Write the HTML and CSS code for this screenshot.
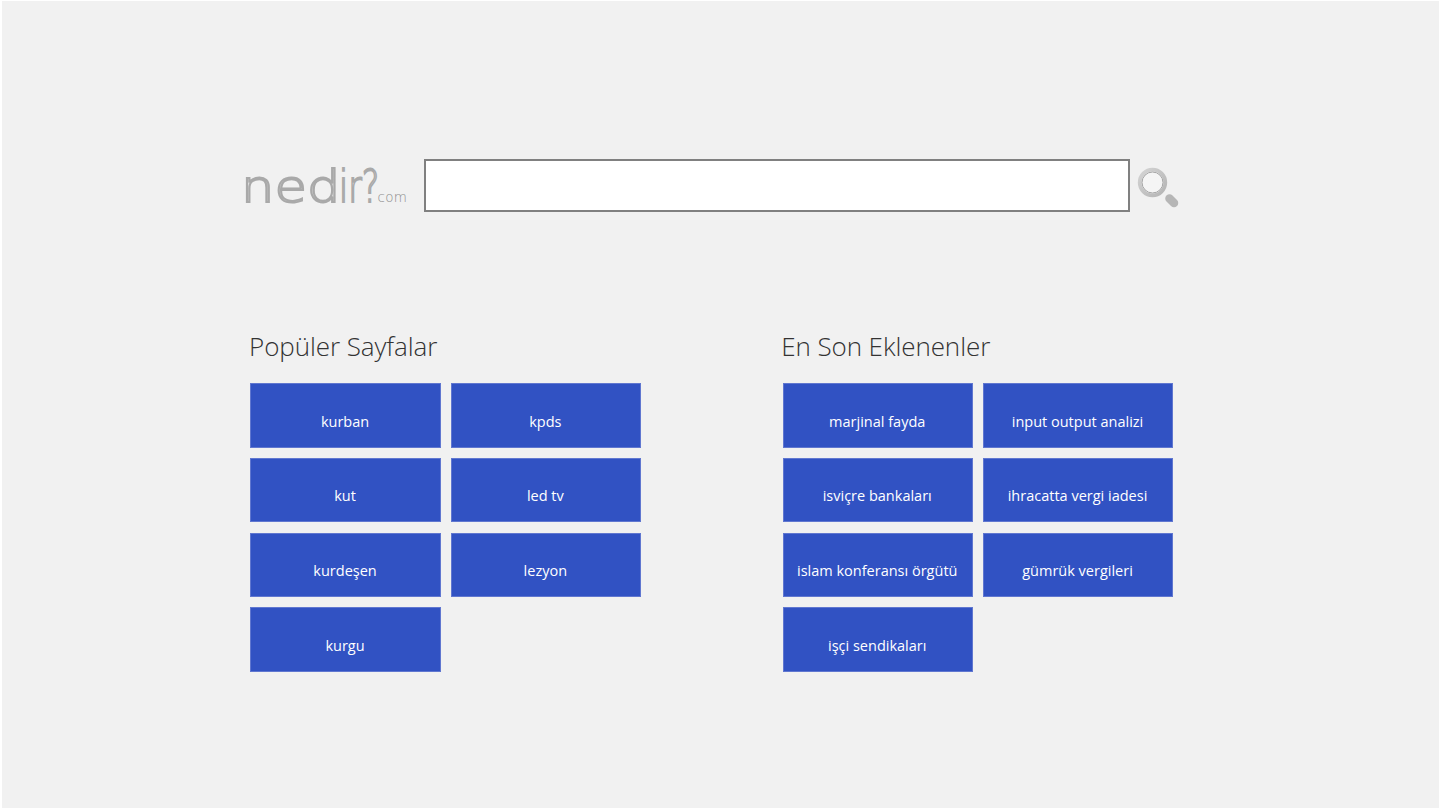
FILE: index.html
```html
<!DOCTYPE html>
<html lang="tr">
<head>
<meta charset="utf-8">
<title>nedir?.com</title>
<link rel="stylesheet" href="styles.css">
</head>
<body>
<div class="frame">
  <header class="search-row">
    <div class="logo"><span class="logo-main logo-wide">ned</span><span class="logo-main logo-narrow">ir?</span><span class="logo-tld">com</span></div>
    <div class="search-box"></div>
    <svg class="search-icon" width="42" height="44" viewBox="0 0 42 44" aria-hidden="true">
      <defs>
        <linearGradient id="ring" x1="0" y1="0" x2="1" y2="1">
          <stop offset="0" stop-color="#d4d4d4"/>
          <stop offset="1" stop-color="#b4b4b4"/>
        </linearGradient>
      </defs>
      <circle cx="15.500" cy="16.500" r="12.800" fill="#f5f5f5" stroke="url(#ring)" stroke-width="3.800"/>
      <circle cx="15.500" cy="16.500" r="10.500" fill="none" stroke="#a4a4a4" stroke-width="1"/>
      <line x1="32.500" y1="32.500" x2="37" y2="37" stroke="#b6b6b6" stroke-width="8.500" stroke-linecap="round"/>
    </svg>
  </header>
  <main class="sections">
    <section class="section">
      <h2 class="section-title">Popüler Sayfalar</h2>
      <div class="tiles">
        <a class="tile">kurban</a>
        <a class="tile">kpds</a>
        <a class="tile">kut</a>
        <a class="tile">led tv</a>
        <a class="tile">kurdeşen</a>
        <a class="tile">lezyon</a>
        <a class="tile">kurgu</a>
      </div>
    </section>
    <section class="section">
      <h2 class="section-title">En Son Eklenenler</h2>
      <div class="tiles">
        <a class="tile">marjinal fayda</a>
        <a class="tile">input output analizi</a>
        <a class="tile">isviçre bankaları</a>
        <a class="tile">ihracatta vergi iadesi</a>
        <a class="tile">islam konferansı örgütü</a>
        <a class="tile">gümrük vergileri</a>
        <a class="tile">işçi sendikaları</a>
      </div>
    </section>
  </main>
</div>
</body>
</html>
```
FILE: styles.css
```css
* { box-sizing: border-box; }
html, body { margin: 0; height: 100%; }
body {
  background: #fff;
  font-family: "Open Sans", "Noto Sans", sans-serif;
  overflow: hidden;
}
.frame {
  width: 1440px;
  height: 810px;
  background: #f1f1f1;
  border-style: solid;
  border-color: #fff;
  border-width: 1px 1px 2px 2px;
  padding: 158px 0 0 243px;
}
.search-row {
  display: flex;
  align-items: flex-start;
  height: 53px;
}
.logo {
  width: 179px;
  height: 53px;
  display: flex;
  align-items: baseline;
  padding-top: 3px;
  font-family: "DejaVu Sans", sans-serif;
  font-weight: 200;
  white-space: nowrap;
}
.logo-main {
  display: inline-block;
  font-size: 44px;
  line-height: 50px;
  color: #e0e0e0;
  -webkit-text-stroke: 1.800px #a9a9a9;
  transform-origin: left bottom;
}
.logo-wide {
  transform: scaleX(1.200);
  margin: 0 15px 0 -4px;
}
.logo-narrow {
  transform: scaleX(0.750);
  margin-right: -15px;
}
.logo-tld {
  font-size: 13.500px;
  letter-spacing: 0.200px;
  color: #8a8a8a;
}
.search-box {
  width: 706px;
  height: 53px;
  background: #fff;
  border: 2px solid #808080;
}
.search-icon { margin: 7px 0 0 7px; }
.sections {
  display: flex;
  margin-top: 116px;
  padding-left: 4px;
}
.section { width: 532.200px; }
.section-title {
  margin: 0 0 19.200px;
  font-size: 26px;
  line-height: 36px;
  font-weight: 300;
  letter-spacing: -0.080px;
  color: #333;
}
.tiles {
  display: grid;
  grid-template-columns: 190.300px 190.300px;
  grid-auto-rows: 64.600px;
  row-gap: 10.100px;
  column-gap: 10px;
  margin-left: 1.400px;
}
.tile {
  display: flex;
  align-items: flex-end;
  justify-content: center;
  height: 100%;
  padding: 0 1px 15px 0;
  background: #3152c3;
  border: 1px solid #6077d0;
  color: #fff;
  font-size: 14.500px;
  line-height: 20px;
}
```
